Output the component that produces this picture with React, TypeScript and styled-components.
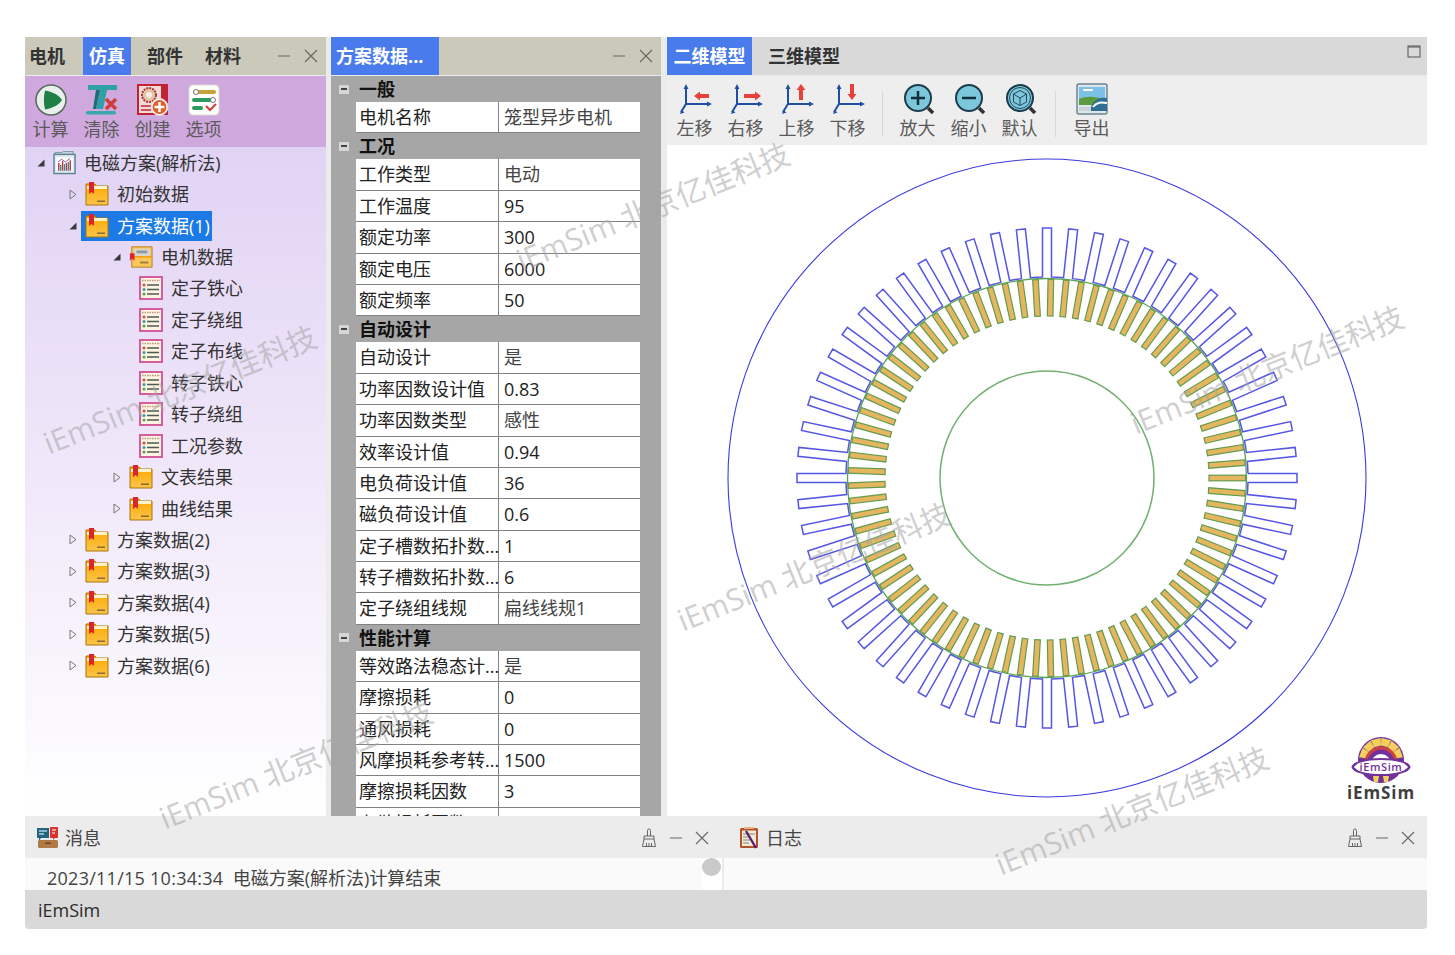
import React from 'react';
import styled, { createGlobalStyle } from 'styled-components';

const GlobalStyle = createGlobalStyle`
  html, body {
    margin: 0;
    background: #fff;
    font-family: "Open Sans", "Noto Sans CJK SC", sans-serif;
  }
`;

const Page = styled.div`
  padding: 37px 28px 26px 25px;
`;

const Frame = styled.div`
  position: relative;
  width: 1402px;
  height: 892px;
  display: flex;
  flex-direction: column;
  overflow: hidden;
  background: #ebebeb;
  border-radius: 0 0 4px 4px;
  font-size: 18px;
  line-height: 24px;
  color: #333;
`;

const MainRow = styled.div`
  display: flex;
  height: 779px;
`;

const Panel = styled.section<{ $width: number; $gap?: number }>`
  width: ${(p) => p.$width}px;
  margin-right: ${(p) => p.$gap || 0}px;
  display: flex;
  flex-direction: column;
  flex: none;
  overflow: hidden;
`;

const Header = styled.header<{ $bg: string }>`
  height: 38px;
  flex: none;
  display: flex;
  align-items: center;
  background: ${(p) => p.$bg};
  margin-bottom: 1px;
`;

const Tab = styled.div<{ $active?: boolean; $width: number; $before?: number; $inset?: number }>`
  width: ${(p) => p.$width}px;
  box-sizing: border-box;
  margin-left: ${(p) => p.$before || 0}px;
  padding-left: ${(p) => p.$inset || 0}px;
  height: 38px;
  line-height: 38px;
  text-align: ${(p) => (p.$inset ? 'left' : 'center')};
  font-weight: 700;
  white-space: nowrap;
  color: ${(p) => (p.$active ? '#fff' : '#333')};
  background: ${(p) => (p.$active ? '#4a7bec' : 'transparent')};
`;

const Controls = styled.div<{ $gap?: number; $right: number; $lift?: number }>`
  margin-left: auto;
  margin-right: ${(p) => p.$right}px;
  padding-bottom: ${(p) => p.$lift || 0}px;
  display: flex;
  align-items: center;
  gap: ${(p) => p.$gap || 12}px;
`;

const Toolbar = styled.div<{ $bg: string; $height: number; $left: number; $top: number }>`
  height: ${(p) => p.$height}px;
  box-sizing: border-box;
  flex: none;
  display: flex;
  align-items: flex-start;
  padding: ${(p) => p.$top}px 0 0 ${(p) => p.$left}px;
  background: ${(p) => p.$bg};
`;

const ToolButton = styled.div`
  width: 51px;
  flex: none;
  display: flex;
  flex-direction: column;
  align-items: center;
  gap: 1px;
  color: #5a5a5a;
  svg {
    display: block;
  }
`;

const ToolSep = styled.div<{ $gap: number }>`
  width: 1px;
  height: 46px;
  margin: 8px ${(p) => p.$gap}px 0;
  background: #d8d8d8;
  flex: none;
`;

const Tree = styled.div`
  flex: 1;
  background: linear-gradient(#e1d3f4, #efe6f9 45%, #fff 100%);
`;

const TreeRow = styled.div<{ $indent: number }>`
  height: 31.45px;
  display: flex;
  align-items: center;
  padding-left: ${(p) => p.$indent}px;
`;

const ArrowBox = styled.span`
  width: 16px;
  flex: none;
  display: flex;
  align-items: center;
`;

const TreeLabel = styled.span<{ $selected?: boolean }>`
  height: 30px;
  display: inline-flex;
  align-items: center;
  gap: 8px;
  margin-left: -4px;
  padding: 0 2px 0 4px;
  white-space: nowrap;
  color: ${(p) => (p.$selected ? '#fff' : '#333')};
  background: ${(p) => (p.$selected ? '#1c7ae6' : 'transparent')};
`;

const GridBody = styled.div`
  flex: 1;
  overflow: hidden;
  background: #a6a6a6;
`;

const GroupRow = styled.div`
  height: 26px;
  display: flex;
  align-items: center;
  padding-left: 8px;
  font-weight: 700;
  color: #111;
`;

const Minus = styled.span`
  width: 10px;
  height: 9px;
  margin-right: 10px;
  display: flex;
  align-items: center;
  justify-content: center;
  background: #d6d6d6;
  &::after {
    content: '';
    width: 6px;
    height: 2px;
    background: #444;
  }
`;

const PropRow = styled.div`
  height: 31.4px;
  box-sizing: border-box;
  margin: 0 21px 0 25px;
  display: grid;
  grid-template-columns: 143px 1fr;
  background: #fff;
  border-bottom: 1px solid #828282;
  color: #222;
  line-height: 30px;
`;

const PropName = styled.div`
  padding-left: 3px;
  border-right: 1px solid #828282;
  white-space: nowrap;
`;

const PropValue = styled.div<{ $soft?: boolean }>`
  padding-left: 5px;
  white-space: nowrap;
  color: ${(p) => (p.$soft ? '#444' : '#222')};
`;

const Canvas = styled.div`
  position: relative;
  flex: 1;
  display: flex;
  align-items: center;
  justify-content: center;
  padding-bottom: 5px;
  background: #fff;
  box-sizing: border-box;
`;

const LogoBox = styled.div`
  position: absolute;
  right: 10px;
  bottom: 13px;
  width: 72px;
  display: flex;
  flex-direction: column;
  align-items: center;
  font-size: 17px;
  line-height: 20px;
  font-weight: 700;
  letter-spacing: 0.9px;
  color: #3f3f3f;
`;

const BottomRow = styled.div`
  height: 74px;
  display: flex;
  flex: none;
`;

const Dock = styled.div<{ $width: number; $gap?: number }>`
  width: ${(p) => p.$width}px;
  margin-right: ${(p) => p.$gap || 0}px;
  flex: none;
  display: flex;
  flex-direction: column;
`;

const DockHead = styled.div`
  height: 42px;
  box-sizing: border-box;
  padding-top: 2px;
  flex: none;
  display: flex;
  align-items: center;
  background: #ececec;
`;

const DockTitle = styled.span<{ $left: number; $gap: number }>`
  display: flex;
  align-items: center;
  gap: ${(p) => p.$gap}px;
  padding-left: ${(p) => p.$left}px;
  color: #444;
`;

const DockBody = styled.div`
  flex: 1;
  display: flex;
  background: #fafafa;
  overflow: hidden;
`;

const LogText = styled.div`
  flex: 1;
  padding: 8px 0 0 22px;
  white-space: nowrap;
  color: #444;
`;

const LogTime = styled.span`
  letter-spacing: 0.26px;
`;

const ScrollStrip = styled.div`
  width: 20px;
  background: #fff;
  &::before {
    content: '';
    display: block;
    width: 19px;
    height: 18px;
    border-radius: 50%;
    background: #c9c9c9;
  }
`;

const StatusBar = styled.footer`
  height: 39px;
  flex: none;
  padding-left: 13px;
  line-height: 40px;
  background: #d9d9d9;
  color: #2a2a2a;
`;

const Watermark = styled.div<{ $x: number; $y: number }>`
  position: absolute;
  left: ${(p) => p.$x}px;
  top: ${(p) => p.$y}px;
  transform: translate(-50%, -50%) rotate(-22deg);
  font-size: 30px;
  line-height: 40px;
  white-space: nowrap;
  color: rgba(165, 165, 165, 0.55);
  pointer-events: none;
`;

// ---- small drawings ----

const Arrow = ({ open }: { open: boolean }) =>
  open ? (
    <svg width="8" height="8" viewBox="0 0 8 8">
      <path d="M7.5 .5V7.5H.5Z" fill="#3a3a3a" />
    </svg>
  ) : (
    <svg width="8" height="11" viewBox="0 0 8 11">
      <path d="M1 1L7 5.5L1 10Z" fill="none" stroke="#777" />
    </svg>
  );

const FolderIcon = () => (
  <svg width="24" height="24" viewBox="0 0 24 24">
    <defs>
      <linearGradient id="fold" x1="0" y1="0" x2="0" y2="1">
        <stop offset="0" stopColor="#ffa800" />
        <stop offset="1" stopColor="#fac54a" />
      </linearGradient>
    </defs>
    <path d="M1 2H10L11 4H23V23H1Z" fill="url(#fold)" stroke="#a8740c" />
    <rect x="2" y="4" width="20" height="3" fill="#fff1c8" />
    <path d="M4 0H9V12L6.500 10L4 12Z" fill="#d8262c" />
    <rect x="12" y="18.500" width="8" height="1.500" fill="#8b6a34" />
  </svg>
);

const DataFolderIcon = () => (
  <svg width="24" height="24" viewBox="0 0 26 24">
    <path d="M3 1H25V23H3Z" fill="#fbc65a" stroke="#b27c1e" />
    <rect x="5" y="3" width="18" height="8" fill="#d8d5cc" />
    <rect x="8" y="5" width="12" height="3" rx="1" fill="#8f9aa0" />
    <rect x="3" y="11" width="22" height="1.500" fill="#f59b0a" />
    <path d="M1 8H6V16L3.500 14L1 16Z" fill="#d8262c" />
    <rect x="12" y="17" width="9" height="2" fill="#a07c40" />
  </svg>
);

const ListIcon = () => (
  <svg width="24" height="24" viewBox="0 0 24 24">
    <rect x="1" y="1" width="22" height="22" fill="#fdf5e2" stroke="#d65c9e" strokeWidth="2" />
    <path d="M3 4.500H21" stroke="#b39a80" strokeWidth="1.500" strokeDasharray="1.500 1" />
    <path d="M8 9H20M8 13.500H20M8 18H20" stroke="#4c5a52" strokeWidth="1.300" />
    <circle cx="5" cy="9" r="1.500" fill="#d8483c" />
    <circle cx="5" cy="13.500" r="1.500" fill="#2f9fa8" />
    <circle cx="5" cy="18" r="1.500" fill="#49a84c" />
  </svg>
);

const RootIcon = () => (
  <svg width="23" height="24" viewBox="0 0 24 24">
    <path d="M2 3V1H9L11 0H21V3" fill="#c6d3dc" stroke="#7f98a8" />
    <rect x="1" y="3" width="22" height="20" fill="#dfe9ee" stroke="#5c8398" strokeWidth="1.500" />
    <rect x="3.500" y="6" width="17" height="14" fill="#fff" />
    <path d="M6 20V12M10 20V10M14 20V12M18 20V9" stroke="#c8383c" strokeWidth="1.500" />
    <path d="M8 20V14M12 20V13M16 20V11" stroke="#3a8a9a" strokeWidth="1.500" />
    <path d="M5 11L9 8L13 11L18 7" fill="none" stroke="#7a5fb0" />
  </svg>
);

const PlayIcon = () => (
  <svg width="32" height="32" viewBox="0 0 32 32">
    <circle cx="16" cy="16" r="15" fill="#e9efea" stroke="#586664" strokeWidth="1.500" />
    <path d="M10 6.500C17 7.500 24 11 27 16C24 21 17 24.500 10 25.500C8.500 19 8.500 13 10 6.500Z" fill="#1f7f45" />
  </svg>
);

const ClearIcon = () => (
  <svg width="34" height="32" viewBox="0 0 34 32">
    <path d="M3 1H32V6H22L18 25H11L15 6H3Z" fill="#2f9fa8" />
    <path d="M11 6H15L11 25H8Z" fill="#1d6d78" />
    <rect x="1" y="27" width="30" height="3.500" rx="1.500" fill="#3aa7ae" />
    <path d="M21 15L31 25M31 15L21 25" stroke="#cf3d3d" strokeWidth="3.500" />
  </svg>
);

const CreateIcon = () => (
  <svg width="32" height="32" viewBox="0 0 32 32">
    <rect x="1" y="1" width="29" height="29" fill="#f4dcd6" stroke="#c12234" strokeWidth="2" />
    <rect x="24" y="1" width="6" height="29" fill="#c12234" />
    <circle cx="12" cy="11" r="7" fill="#e8c3a6" stroke="#a53a3a" strokeWidth="2" strokeDasharray="2 1" />
    <circle cx="12" cy="11" r="3" fill="#f8f0e8" />
    <path d="M4 22H16M4 26H14" stroke="#c12234" strokeWidth="1.500" />
    <circle cx="22.500" cy="23" r="8.500" fill="#fff" stroke="#e8d8d0" />
    <circle cx="22.500" cy="23" r="7" fill="#e25c2e" />
    <path d="M22.500 18V28M17.500 23H27.500" stroke="#fff" strokeWidth="2.500" />
  </svg>
);

const OptionsIcon = () => (
  <svg width="32" height="32" viewBox="0 0 32 32">
    <rect x="1" y="1" width="30" height="30" rx="4" fill="#fdfdfa" stroke="#dfdcd4" />
    <rect x="5" y="6" width="23" height="4" rx="2" fill="#c7a23a" />
    <circle cx="8" cy="8" r="2.500" fill="#fff" stroke="#777" />
    <rect x="4" y="14" width="22" height="4" rx="2" fill="#2d9a5f" />
    <circle cx="25" cy="16" r="2.500" fill="#fff" stroke="#777" />
    <rect x="4" y="22" width="11" height="4" rx="2" fill="#2d9a5f" />
    <path d="M18 22L22 26L28 20" fill="none" stroke="#cf3d3d" strokeWidth="2" />
  </svg>
);

type Dir = 'left' | 'right' | 'up' | 'down';

const redArrows: Record<Dir, string> = {
  left: 'M15 13L21 8.500V11H30V15H21V17.500Z',
  right: 'M31 13L25 8.500V11H14V15H25V17.500Z',
  up: 'M20 1L15.500 7H18V17H22V7H24.500Z',
  down: 'M20 17L15.500 11H18V1H22V11H24.500Z',
};

const AxisIcon = ({ dir }: { dir: Dir }) => (
  <svg width="34" height="32" viewBox="-1 0 34 32">
    <path d="M7 5V21H29M7 21L2 29" fill="none" stroke="#1f4fa3" strokeWidth="2" />
    <path d="M7 1L4.500 6H9.500ZM33 21L28 18.500V23.500ZM1 31L5.500 29.500L2.500 27Z" fill="#1f4fa3" />
    <path d={redArrows[dir]} fill="#e8403a" />
  </svg>
);

const ZoomIcon = ({ kind }: { kind: 'in' | 'out' | 'fit' }) => (
  <svg width="34" height="32" viewBox="-1 0 34 32">
    <circle cx="16" cy="15" r="13" fill="#7cc7dc" stroke="#1d3c4c" strokeWidth="2" />
    <path d="M26 25L31 30" stroke="#333" strokeWidth="3.500" />
    {kind !== 'fit' && <path d="M9 15H23" stroke="#14303c" strokeWidth="2.500" />}
    {kind === 'in' && <path d="M16 8V22" stroke="#14303c" strokeWidth="2.500" />}
    {kind === 'fit' && (
      <g fill="none" stroke="#1d3c4c" strokeWidth="0.900">
        <circle cx="16" cy="15" r="10.500" />
        <path d="M16 7.500L22.500 11V19L16 22.500L9.500 19V11ZM9.500 11L16 15L22.500 11M16 15V22.500" />
      </g>
    )}
  </svg>
);

const ExportIcon = () => (
  <svg width="34" height="32" viewBox="0 0 34 32">
    <rect x="2" y="1" width="30" height="30" rx="2" fill="#dde6ea" stroke="#6c8592" strokeWidth="1.500" />
    <rect x="4" y="4" width="26" height="14" fill="#7cc0e8" />
    <rect x="8" y="6" width="10" height="2" rx="1" fill="#fff" />
    <path d="M4 16C12 13 20 13 30 17V22H4Z" fill="#5c9a3f" />
    <path d="M16 24C20 15 26 14 32 15V28H16Z" fill="#2f6f96" />
    <path d="M18 24C22 19 26 19 32 20" fill="none" stroke="#fff" strokeWidth="2" />
    <rect x="4" y="24" width="12" height="4" fill="#c8d4d8" />
  </svg>
);

const MessageIcon = () => (
  <svg width="22" height="22" viewBox="0 0 22 22">
    <rect x="1" y="13" width="20" height="8" rx="1.500" fill="#b07a44" />
    <rect x="8" y="15.500" width="6" height="1.500" fill="#6c4726" />
    <path d="M0 1H12V11H4L2 14V11H0Z" fill="#24637c" />
    <path d="M2 4H10M2 7H7" stroke="#a9d4e0" strokeWidth="1.300" />
    <path d="M13 0H21V11H18L16 13V11H13Z" fill="#d8342f" />
    <path d="M15 3H19M15 6H18" stroke="#fff" strokeWidth="1.200" />
  </svg>
);

const LogIcon = () => (
  <svg width="20" height="22" viewBox="0 0 20 22">
    <rect x="1" y="1" width="18" height="20" rx="1.500" fill="#b5502c" />
    <rect x="3" y="3.500" width="14" height="15.500" fill="#f2ead8" />
    <path d="M5 1H15" stroke="#e6b27c" strokeWidth="2" />
    <path d="M4 7H16M4 10H12M4 13H11M4 16H10" stroke="#7f8a76" strokeWidth="1.200" />
    <path d="M7 4L17 21" stroke="#5b2170" strokeWidth="2.400" />
  </svg>
);

const BroomIcon = () => (
  <svg width="16" height="20" viewBox="0 0 16 20" fill="none" stroke="#666">
    <path d="M6.500 8V2.500A1.500 1.500 0 0 1 9.500 2.500V8" />
    <path d="M3 8H13V11H3ZM3 11L1.500 18.500H14.500L13 11M5.500 15V18.500M8 15V18.500M10.500 15V18.500" />
  </svg>
);

const MinusLine = () => (
  <svg width="12" height="12" viewBox="0 0 12 12">
    <path d="M0 6H12" stroke="#666" />
  </svg>
);

const CloseX = () => (
  <svg width="14" height="14" viewBox="0 0 14 14">
    <path d="M1 1L13 13M13 1L1 13" stroke="#666" strokeWidth="1.100" />
  </svg>
);

const RestoreBox = () => (
  <svg width="14" height="14" viewBox="0 0 14 14">
    <rect x="1" y="1" width="12" height="11" fill="none" stroke="#555" />
    <path d="M1 2H13" stroke="#555" />
  </svg>
);

const LogoMark = () => (
  <svg width="60" height="47" viewBox="0 0 60 47">
    <circle cx="30" cy="24" r="23" fill="#70319c" />
    {[-70, -42, -14, 14, 42, 70].map((a) => (
      <path key={a} d="M25 2.500H35L33.500 10H26.500Z" fill="#f5cf5c" transform={`rotate(${a} 30 24)`} />
    ))}
    <path d="M15 27A15 15 0 0 1 45 27" fill="none" stroke="#d2423f" strokeWidth="3" />
    <path d="M19 28A11 11 0 0 1 41 28" fill="#fff" stroke="#70319c" strokeWidth="2" />
    <ellipse cx="30" cy="31" rx="28" ry="8" fill="#fff" stroke="#70319c" strokeWidth="2" />
    <path d="M1 31L6 27M1 31L6 35M59 31L54 27M59 31L54 35" stroke="#70319c" strokeWidth="2" />
    <text x="30" y="35" textAnchor="middle" fontSize="11" fontWeight="600" letterSpacing="0.600" fill="#70319c">
      iEmSim
    </text>
    <path d="M22 40H28L27 46H23ZM32 40H38L37 46H33Z" fill="#f5cf5c" />
  </svg>
);

// ---- motor section ----

const cx = 320;
const cy = 320;
const STATOR = 60;
const ROTOR = 81;

const polar = (r: number, deg: number) => {
  const t = (deg * Math.PI) / 180;
  return [cx + r * Math.cos(t), cy + r * Math.sin(t)];
};

const statorPath = () => {
  const base = 201;
  const half = 4.5;
  const off = (Math.asin(half / base) * 180) / Math.PI;
  let d = '';
  for (let i = 0; i < STATOR; i++) {
    const a = (i * 360) / STATOR;
    const t = (a * Math.PI) / 180;
    const tip = (r: number, s: number) => [
      cx + r * Math.cos(t) - s * Math.sin(t),
      cy + r * Math.sin(t) + s * Math.cos(t),
    ];
    const p1 = polar(base, a - off);
    const p2 = tip(250, -half);
    const p3 = tip(250, half);
    const p4 = polar(base, a + off);
    d += `${i === 0 ? 'M' : 'A201 201 0 0 1 '}${p1[0].toFixed(2)} ${p1[1].toFixed(2)}`;
    d += `L${p2[0].toFixed(2)} ${p2[1].toFixed(2)}L${p3[0].toFixed(2)} ${p3[1].toFixed(2)}L${p4[0].toFixed(2)} ${p4[1].toFixed(2)}`;
  }
  const start = polar(base, -off);
  return `${d}A201 201 0 0 1 ${start[0].toFixed(2)} ${start[1].toFixed(2)}`;
};

const MotorSection = () => (
  <svg width="640" height="640" viewBox="0 0 640 640">
    <circle cx={cx} cy={cy} r="319" fill="none" stroke="#3a3ae0" strokeWidth="1.100" />
    <path d={statorPath()} fill="none" stroke="#5555e6" strokeWidth="1.500" />
    <circle cx={cx} cy={cy} r="199.500" fill="none" stroke="#5aa05a" strokeWidth="1.300" />
    {Array.from({ length: ROTOR }, (_, i) => (
      <rect
        key={i}
        x={cx + 162}
        y={cy - 2.8}
        width="36.500"
        height="5.600"
        fill="#e6b560"
        stroke="#639c4c"
        strokeWidth="1.200"
        transform={`rotate(${(i * 360) / ROTOR} ${cx} ${cy})`}
      />
    ))}
    <circle cx={cx} cy={cy} r="107" fill="none" stroke="#72b072" strokeWidth="1.500" />
  </svg>
);

// ---- data ----

type Node = { text: string; depth: number; open?: boolean; selected?: boolean; icon: 'root' | 'folder' | 'data' | 'list' };

const nodes: Node[] = [
  { text: '电磁方案(解析法)', depth: 0, open: true, icon: 'root' },
  { text: '初始数据', depth: 1, open: false, icon: 'folder' },
  { text: '方案数据(1)', depth: 1, open: true, selected: true, icon: 'folder' },
  { text: '电机数据', depth: 2, open: true, icon: 'data' },
  { text: '定子铁心', depth: 3, icon: 'list' },
  { text: '定子绕组', depth: 3, icon: 'list' },
  { text: '定子布线', depth: 3, icon: 'list' },
  { text: '转子铁心', depth: 3, icon: 'list' },
  { text: '转子绕组', depth: 3, icon: 'list' },
  { text: '工况参数', depth: 3, icon: 'list' },
  { text: '文表结果', depth: 2, open: false, icon: 'folder' },
  { text: '曲线结果', depth: 2, open: false, icon: 'folder' },
  { text: '方案数据(2)', depth: 1, open: false, icon: 'folder' },
  { text: '方案数据(3)', depth: 1, open: false, icon: 'folder' },
  { text: '方案数据(4)', depth: 1, open: false, icon: 'folder' },
  { text: '方案数据(5)', depth: 1, open: false, icon: 'folder' },
  { text: '方案数据(6)', depth: 1, open: false, icon: 'folder' },
];

const indents = [12, 44, 88, 98];

const treeIcons = {
  root: <RootIcon />,
  folder: <FolderIcon />,
  data: <DataFolderIcon />,
  list: <ListIcon />,
};

const groups: { title: string; rows: [string, string][] }[] = [
  { title: '一般', rows: [['电机名称', '笼型异步电机']] },
  {
    title: '工况',
    rows: [
      ['工作类型', '电动'],
      ['工作温度', '95'],
      ['额定功率', '300'],
      ['额定电压', '6000'],
      ['额定频率', '50'],
    ],
  },
  {
    title: '自动设计',
    rows: [
      ['自动设计', '是'],
      ['功率因数设计值', '0.83'],
      ['功率因数类型', '感性'],
      ['效率设计值', '0.94'],
      ['电负荷设计值', '36'],
      ['磁负荷设计值', '0.6'],
      ['定子槽数拓扑数...', '1'],
      ['转子槽数拓扑数...', '6'],
      ['定子绕组线规', '扁线线规1'],
    ],
  },
  {
    title: '性能计算',
    rows: [
      ['等效路法稳态计...', '是'],
      ['摩擦损耗', '0'],
      ['通风损耗', '0'],
      ['风摩损耗参考转...', '1500'],
      ['摩擦损耗因数', '3'],
      ['杂散损耗因数', '1'],
    ],
  },
];

const watermarks = [
  [155, 353],
  [628, 170],
  [1242, 333],
  [789, 530],
  [271, 728],
  [1107, 774],
];

const leftTools = [
  { label: '计算', icon: <PlayIcon /> },
  { label: '清除', icon: <ClearIcon /> },
  { label: '创建', icon: <CreateIcon /> },
  { label: '选项', icon: <OptionsIcon /> },
];

const moveTools: { label: string; dir: Dir }[] = [
  { label: '左移', dir: 'left' },
  { label: '右移', dir: 'right' },
  { label: '上移', dir: 'up' },
  { label: '下移', dir: 'down' },
];

const App = () => (
  <Page>
    <GlobalStyle />
    <Frame>
      <MainRow>
        <Panel $width={301} $gap={5}>
          <Header $bg="#cbc9ba">
            <Tab $width={44}>电机</Tab>
            <Tab $width={48} $before={14} $active>仿真</Tab>
            <Tab $width={68}>部件</Tab>
            <Tab $width={48}>材料</Tab>
            <Controls $right={8} $gap={14}>
              <MinusLine />
              <CloseX />
            </Controls>
          </Header>
          <Toolbar $bg="#cfa9de" $height={71} $left={0} $top={8}>
            {leftTools.map((t) => (
              <ToolButton key={t.label}>
                {t.icon}
                {t.label}
              </ToolButton>
            ))}
          </Toolbar>
          <Tree>
            {nodes.map((n) => (
              <TreeRow key={n.text} $indent={indents[n.depth]}>
                <ArrowBox>{n.open !== undefined && <Arrow open={n.open} />}</ArrowBox>
                <TreeLabel $selected={n.selected}>
                  {treeIcons[n.icon]}
                  {n.text}
                </TreeLabel>
              </TreeRow>
            ))}
          </Tree>
        </Panel>

        <Panel $width={330} $gap={6}>
          <Header $bg="#cbc9ba">
            <Tab $width={108} $inset={5} $active>方案数据...</Tab>
            <Controls $right={8} $gap={14}>
              <MinusLine />
              <CloseX />
            </Controls>
          </Header>
          <GridBody>
            {groups.map((g) => (
              <div key={g.title}>
                <GroupRow>
                  <Minus />
                  {g.title}
                </GroupRow>
                {g.rows.map(([name, value]) => (
                  <PropRow key={name}>
                    <PropName>{name}</PropName>
                    <PropValue $soft={/[\u4e00-\u9fa5]/.test(value)}>{value}</PropValue>
                  </PropRow>
                ))}
              </div>
            ))}
          </GridBody>
        </Panel>

        <Panel $width={760}>
          <Header $bg="#d9d9d9">
            <Tab $width={85} $active>二维模型</Tab>
            <Tab $width={104}>三维模型</Tab>
            <Controls $right={6} $lift={8}>
              <RestoreBox />
            </Controls>
          </Header>
          <Toolbar $bg="#eeeeee" $height={69} $left={2} $top={7}>
            {moveTools.map((t) => (
              <ToolButton key={t.label}>
                <AxisIcon dir={t.dir} />
                {t.label}
              </ToolButton>
            ))}
            <ToolSep $gap={9} />
            <ToolButton>
              <ZoomIcon kind="in" />
              放大
            </ToolButton>
            <ToolButton>
              <ZoomIcon kind="out" />
              缩小
            </ToolButton>
            <ToolButton>
              <ZoomIcon kind="fit" />
              默认
            </ToolButton>
            <ToolSep $gap={10} />
            <ToolButton>
              <ExportIcon />
              导出
            </ToolButton>
          </Toolbar>
          <Canvas>
            <MotorSection />
            <LogoBox>
              <LogoMark />
              iEmSim
            </LogoBox>
          </Canvas>
        </Panel>
      </MainRow>

      <BottomRow>
        <Dock $width={697} $gap={2}>
          <DockHead>
            <DockTitle $left={12} $gap={6}>
              <MessageIcon />
              消息
            </DockTitle>
            <Controls $right={13} $gap={13}>
              <BroomIcon />
              <MinusLine />
              <CloseX />
            </Controls>
          </DockHead>
          <DockBody>
            <LogText>
              <LogTime>2023/11/15 10:34:34</LogTime>&nbsp;&nbsp;电磁方案(解析法)计算结束
            </LogText>
            <ScrollStrip />
          </DockBody>
        </Dock>
        <Dock $width={703}>
          <DockHead>
            <DockTitle $left={15} $gap={7}>
              <LogIcon />
              日志
            </DockTitle>
            <Controls $right={12} $gap={13}>
              <BroomIcon />
              <MinusLine />
              <CloseX />
            </Controls>
          </DockHead>
          <DockBody />
        </Dock>
      </BottomRow>

      <StatusBar>iEmSim</StatusBar>

      {watermarks.map(([x, y]) => (
        <Watermark key={x} $x={x} $y={y}>
          iEmSim 北京亿佳科技
        </Watermark>
      ))}
    </Frame>
  </Page>
);

export default App;
